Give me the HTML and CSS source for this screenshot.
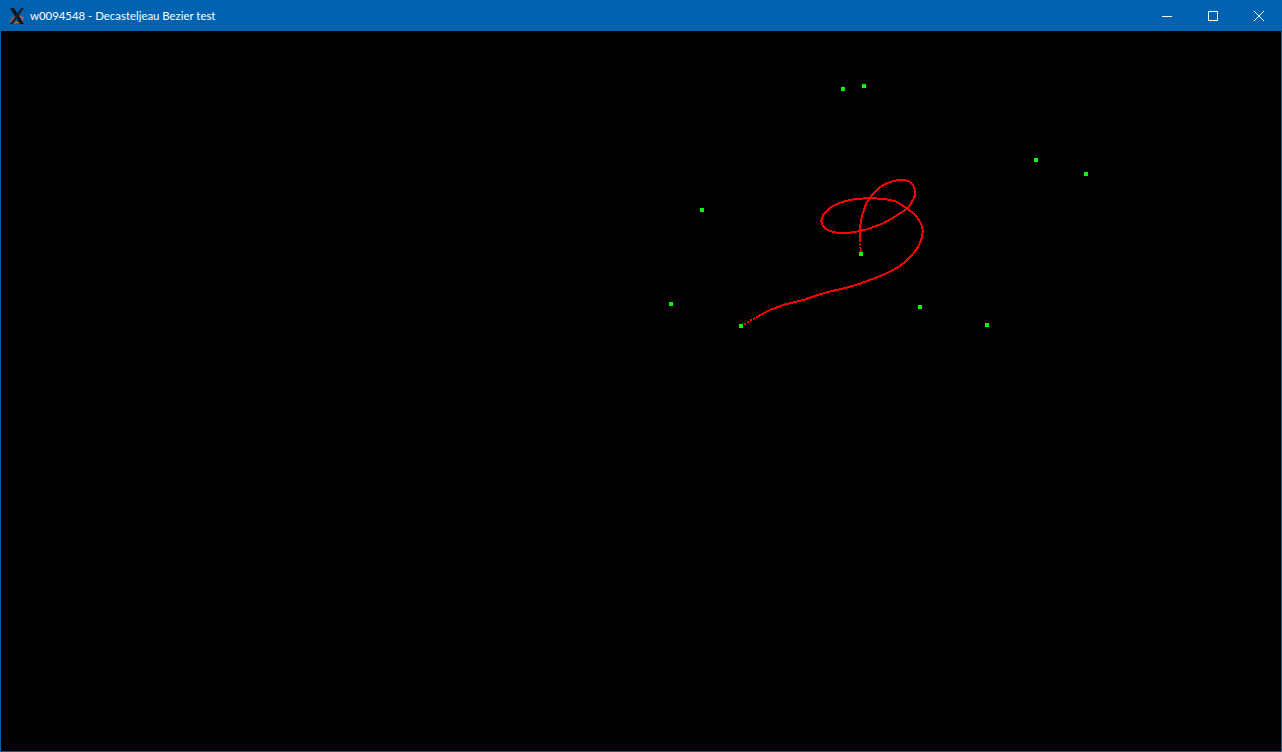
FILE: index.html
```html
<!DOCTYPE html>
<html>
<head>
<meta charset="utf-8">
<title>w0094548 - Decasteljeau Bezier test</title>
<link rel="stylesheet" href="styles.css">
</head>
<body>
<div class="window">
  <div class="titlebar">
    <svg class="app-icon" width="18" height="18" viewBox="0 0 18 18">
      <path d="M3 15 C5 9 11 8 15 11 C14 15 8 17 3 15" fill="none" stroke="#e8622a" stroke-width="1.3"/>
      <path d="M2 1 L6 1 L16 17 L12 17 Z" fill="#111"/>
      <path d="M16 1 L13 1 L2 17 L5 17 Z" fill="#222"/>
    </svg>
    <span class="title">w0094548 - Decasteljeau Bezier test</span>
    <div class="controls">
      <div class="ctl"><svg width="10" height="10" viewBox="0 0 10 10"><path d="M0 5.5 H10" stroke="#fff" stroke-width="1"/></svg></div>
      <div class="ctl"><svg width="10" height="10" viewBox="0 0 10 10"><rect x="0.5" y="0.5" width="9" height="9" fill="none" stroke="#fff" stroke-width="1"/></svg></div>
      <div class="ctl"><svg width="10" height="10" viewBox="0 0 10 10"><path d="M0 0 L10 10 M10 0 L0 10" stroke="#fff" stroke-width="1"/></svg></div>
    </div>
  </div>
  <svg class="view" width="1280" height="720" viewBox="1 31 1280 720">
    <g class="curve">
      <path class="dotted" d="M741 326 L747 322.5 L753.3 319 L758 316.5"/>
      <path d="M758 316.5 L761 314.5 L770 310 L778 307 L786.7 304 L795 302 L803.3 300 L812 297 L820 294.3 L828 292 L836.7 290 L845 288 L853.3 285.7 L862 283 L870 280 L878 277 L886.7 273.3 L894 269.5 L900 266 L905.5 261.5 L910 256.7 L914.5 252 L918.3 246.7 L920.5 241.7 L922 237 L922.7 231.7 L922.3 227 L920.7 223.3 L918.3 219 L915 215 L911 211.5 L907.3 208.7 L902 205 L896.7 201.7 L890 200 L883.3 199 L876 198.4 L869 198.3 L863 198.5 L856.7 199 L850 200 L843.3 201.7 L837 204 L831.7 206.7 L827 210.5 L823.3 215 L821.3 220.7 L822.5 225 L825 228.3 L830 231 L836.7 232.7 L843 233.2 L850 232.7 L858 231.3 L866.7 229.3 L875 226.5 L883.3 223.3 L892 218.5 L900 213.3 L907.3 208.7 L910.5 204 L913.3 199.3 L915 195.5 L915 191.7 L914 187 L911.7 183.3 L908 181 L903.3 180 L899 180 L895 180.7 L889 182.5 L883.3 185 L879 188 L875 191.7 L871.5 195.5 L869 199 L866 204 L864 210 L862.3 215 L861 220 L860.3 226 L860 231.7 L860 237 L860 240"/>
      <path class="dotted" d="M860 240 L860 243.3 L860.5 248 L861 251.7 L861 254"/>
    </g>
    <g class="points">
      <rect x="841" y="87" width="4" height="4"/>
      <rect x="862" y="84" width="4" height="4"/>
      <rect x="1034" y="158" width="4" height="4"/>
      <rect x="1084" y="172" width="4" height="4"/>
      <rect x="700" y="208" width="4" height="4"/>
      <rect x="859" y="252" width="4" height="4"/>
      <rect x="669" y="302" width="4" height="4"/>
      <rect x="739" y="324" width="4" height="4"/>
      <rect x="918" y="305" width="4" height="4"/>
      <rect x="985" y="323" width="4" height="4"/>
    </g>
  </svg>
</div>
</body>
</html>
```
FILE: styles.css
```css
html, body { margin: 0; padding: 0; background: #000; }
.window {
  width: 1282px; height: 752px; box-sizing: border-box;
  border: 1px solid #0063b1; border-top: none;
  display: flex; flex-direction: column; background: #000;
}
.titlebar {
  height: 31px; background: #0063b1; display: flex; align-items: center;
  margin: 0 -1px; padding-left: 8px; flex: none;
}
.app-icon { flex: none; }
.title {
  font-family: "Segoe UI", Lato, "Noto Sans", sans-serif;
  font-size: 11.4px; color: #fff; margin-left: 4px;
}
.controls { margin-left: auto; display: flex; height: 100%; }
.ctl { width: 46px; height: 100%; display: flex; align-items: center; justify-content: center; }
.view { display: block; flex: 1; width: 1280px; height: 720px; background: #000; }
.curve path {
  fill: none; stroke: #ff0000; stroke-width: 2;
  stroke-linejoin: round; shape-rendering: crispEdges;
}
.curve path.dotted { stroke-dasharray: 2 1.5; }
.points rect { fill: #00ff00; shape-rendering: crispEdges; }
```
